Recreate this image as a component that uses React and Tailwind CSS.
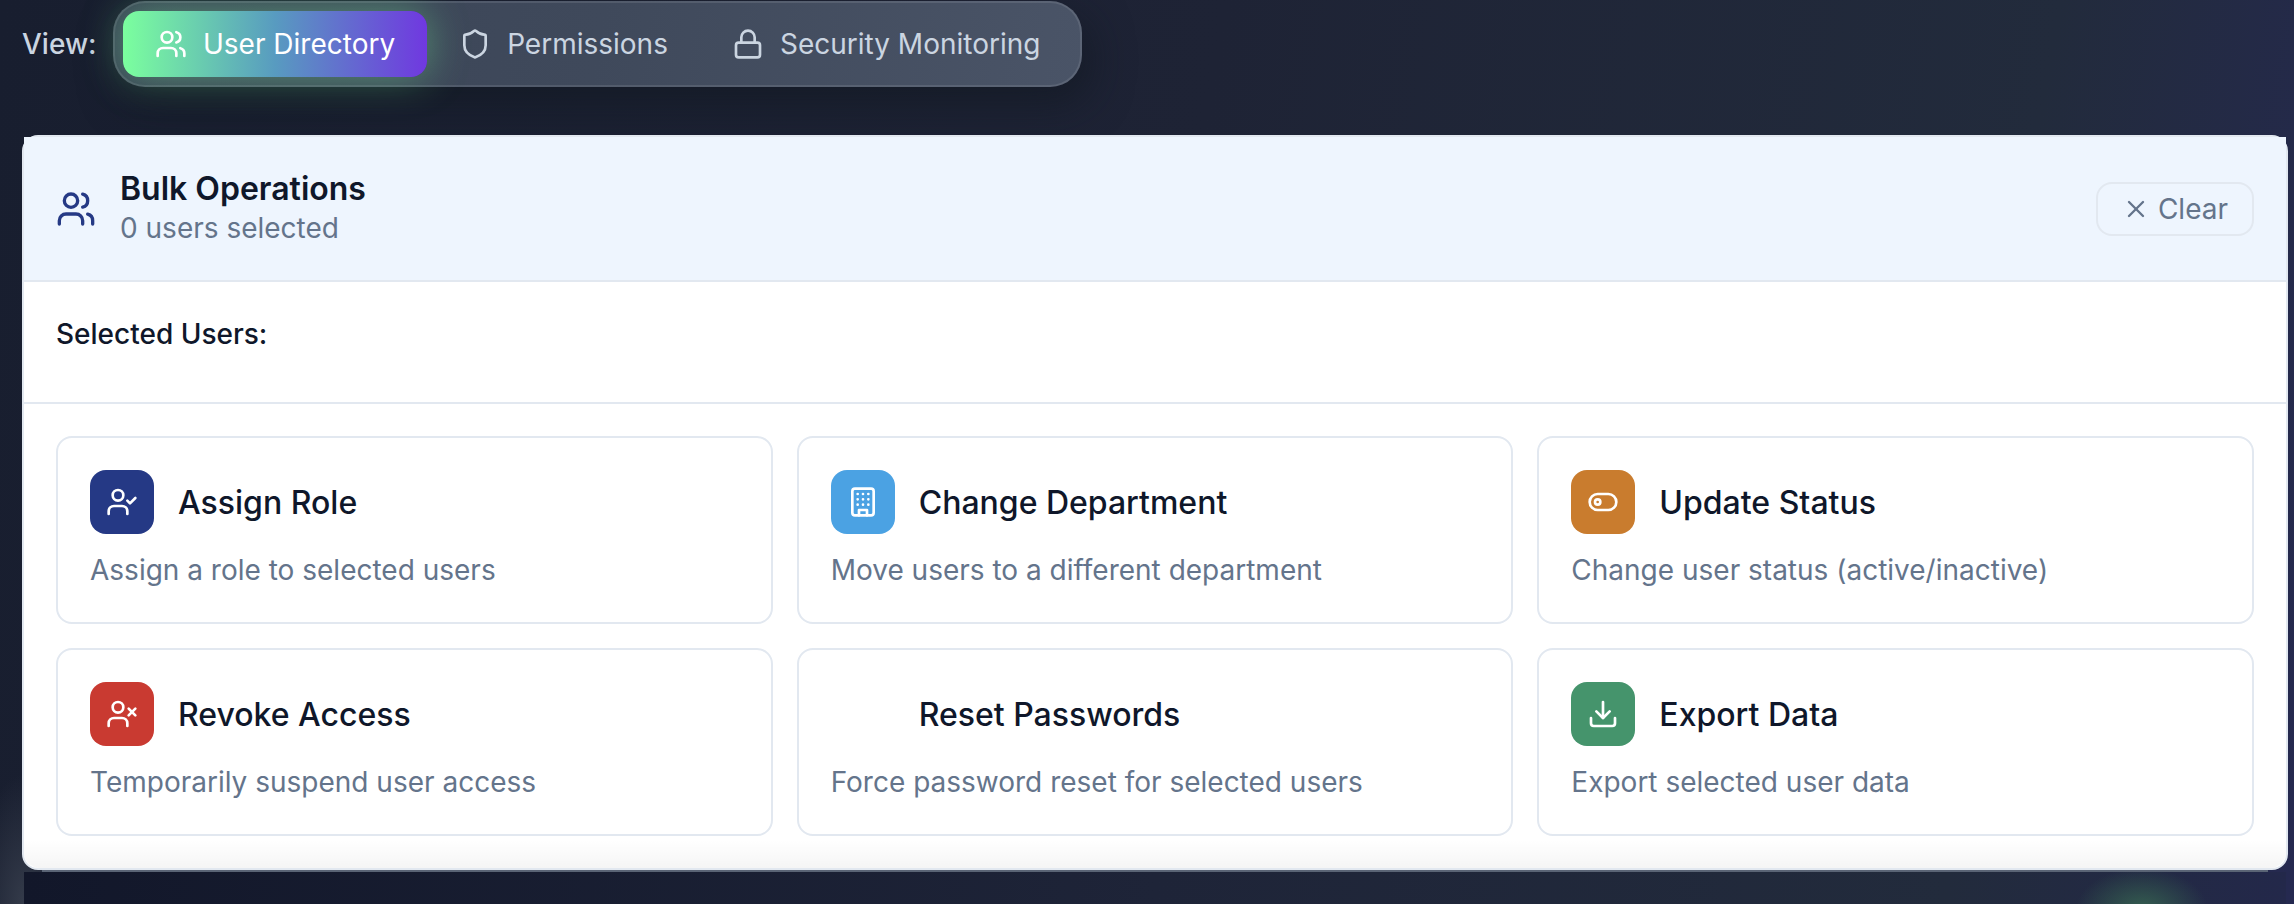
const P = {
  users: (
    <>
      <path d="M16 21v-2a4 4 0 0 0-4-4H6a4 4 0 0 0-4 4v2" />
      <circle cx="9" cy="7" r="4" />
      <path d="M22 21v-2a4 4 0 0 0-3-3.87" />
      <path d="M16 3.13a4 4 0 0 1 0 7.75" />
    </>
  ),
  shield: (
    <path d="M20 13c0 5-3.5 7.5-7.66 8.95a1 1 0 0 1-.67-.01C7.5 20.5 4 18 4 13V6a1 1 0 0 1 1-1c2 0 4.5-1.2 6.24-2.72a1.17 1.17 0 0 1 1.52 0C14.51 3.81 17 5 19 5a1 1 0 0 1 1 1z" />
  ),
  lock: (
    <>
      <rect x="3" y="11" width="18" height="11" rx="2" />
      <path d="M7 11V7a5 5 0 0 1 10 0v4" />
    </>
  ),
  x: (
    <>
      <path d="M18 6 6 18" />
      <path d="m6 6 12 12" />
    </>
  ),
  userCheck: (
    <>
      <path d="M16 21v-2a4 4 0 0 0-4-4H6a4 4 0 0 0-4 4v2" />
      <circle cx="9" cy="7" r="4" />
      <path d="m16 11 2 2 4-4" />
    </>
  ),
  userX: (
    <>
      <path d="M16 21v-2a4 4 0 0 0-4-4H6a4 4 0 0 0-4 4v2" />
      <circle cx="9" cy="7" r="4" />
      <path d="m17 8 5 5" />
      <path d="m22 8-5 5" />
    </>
  ),
  building: (
    <>
      <rect x="4" y="2" width="16" height="20" rx="2" />
      <path d="M9 22v-4h6v4" />
      <path d="M8 6h.01M16 6h.01M12 6h.01M12 10h.01M12 14h.01M16 10h.01M16 14h.01M8 10h.01M8 14h.01" />
    </>
  ),
  toggle: (
    <>
      <rect x="2" y="6" width="20" height="12" rx="6" />
      <circle cx="8" cy="12" r="2" />
    </>
  ),
  download: (
    <>
      <path d="M21 15v4a2 2 0 0 1-2 2H5a2 2 0 0 1-2-2v-4" />
      <path d="m7 10 5 5 5-5" />
      <path d="M12 15V3" />
    </>
  ),
};

function Icon({ name, className }) {
  return (
    <svg
      viewBox="0 0 24 24"
      fill="none"
      stroke="currentColor"
      strokeWidth={2}
      strokeLinecap="round"
      strokeLinejoin="round"
      className={`shrink-0 ${className}`}
    >
      {P[name]}
    </svg>
  );
}

const tabs = [
  { icon: "users", label: "User Directory", active: true },
  { icon: "shield", label: "Permissions" },
  { icon: "lock", label: "Security Monitoring" },
];

const actions = [
  { icon: "userCheck", bg: "bg-[#253985]", title: "Assign Role", text: "Assign a role to selected users" },
  { icon: "building", bg: "bg-[#4ba2e3]", title: "Change Department", text: "Move users to a different department" },
  { icon: "toggle", bg: "bg-[#c97c2e]", title: "Update Status", text: "Change user status (active/inactive)" },
  { icon: "userX", bg: "bg-[#c93a31]", title: "Revoke Access", text: "Temporarily suspend user access" },
  { icon: null, bg: "", title: "Reset Passwords", text: "Force password reset for selected users" },
  { icon: "download", bg: "bg-[#45946c]", title: "Export Data", text: "Export selected user data" },
];

export default function App() {
  return (
    <div className="h-[904px] w-[2294px] overflow-hidden bg-[radial-gradient(50px_130px_at_24px_904px,#343b4a,transparent),linear-gradient(100deg,#181e2f,#1e2335_50%,#222b3c_84%,#252950)] pl-[22px] pr-[6px] pt-px font-['Inter',sans-serif] text-[28px] leading-10">
      <div className="flex h-[86px] items-center">
        <span className="w-[91px] font-medium text-[#cbd5e1]">View:</span>
        <div className="flex h-[86px] rounded-[32px] border-2 border-white/10 bg-[linear-gradient(100deg,#3a4456,#3f495b_50%,#4a5467)] bg-origin-border p-2 shadow-[8px_16px_40px_rgba(17,24,32,0.6)]">
          {tabs.map((t) => (
            <div
              key={t.label}
              className={
                t.active
                  ? "flex items-center gap-4 rounded-2xl bg-[linear-gradient(to_right,#7bff9e,#589bc0_50%,#7038e0)] px-8 text-white shadow-[0_0_40px_rgba(123,255,158,0.4)]"
                  : "flex items-center gap-4 px-8 text-[#cbd5e1]"
              }
            >
              <Icon name={t.icon} className="size-8" />
              <span className="whitespace-nowrap">{t.label}</span>
            </div>
          ))}
        </div>
      </div>

      <div className="relative mt-12 h-[735px] rounded-2xl border-2 border-[#e2e8f0] bg-white">
        <div className="flex h-[145px] items-center justify-between border-b-2 border-[#e2e8f0] bg-[#eef5fe] px-8">
          <div className="flex items-center gap-6">
            <Icon name="users" className="size-10 text-[#253985]" />
            <div className="pb-0.5">
              <div className="text-[32px] font-semibold leading-10 text-[#0f172a]">Bulk Operations</div>
              <div className="leading-[38px] text-[#64748b]">0 users selected</div>
            </div>
          </div>
          <div className="flex h-[54px] items-center gap-2 rounded-2xl border-2 border-[#e2e8f0] px-6 text-[#64748b]">
            <Icon name="x" className="size-7" />
            <span>Clear</span>
          </div>
        </div>
        <div className="h-[122px] border-b-2 border-[#e2e8f0] px-8 pt-8 font-medium text-[#0f172a]">Selected Users:</div>
        <div className="grid grid-cols-3 gap-6 p-8">
          {actions.map((a) => (
            <div key={a.title} className="h-[188px] rounded-2xl border-2 border-[#e2e8f0] p-8">
              <div className="flex items-center gap-6">
                <div className={`flex size-16 items-center justify-center rounded-2xl text-white ${a.bg}`}>
                  {a.icon && <Icon name={a.icon} className="size-8" />}
                </div>
                <span className="pt-0.5 text-[32px] font-medium text-[#0f172a]">{a.title}</span>
              </div>
              <div className="mt-4 text-[#64748b]">{a.text}</div>
            </div>
          ))}
        </div>
        <div className="absolute inset-x-0 bottom-0 h-7 rounded-b-2xl bg-linear-to-b from-transparent to-black/4" />
      </div>
      <div className="mx-5 h-0.5 bg-[#5a6475]" />
      <div className="mx-0.5 h-8 bg-[radial-gradient(66px_42px_at_2118px_38px,#355f50,transparent),linear-gradient(to_right,#12172a,#1e2438_50%,#222b3c_85%,#23284a)]" />
    </div>
  );
}
